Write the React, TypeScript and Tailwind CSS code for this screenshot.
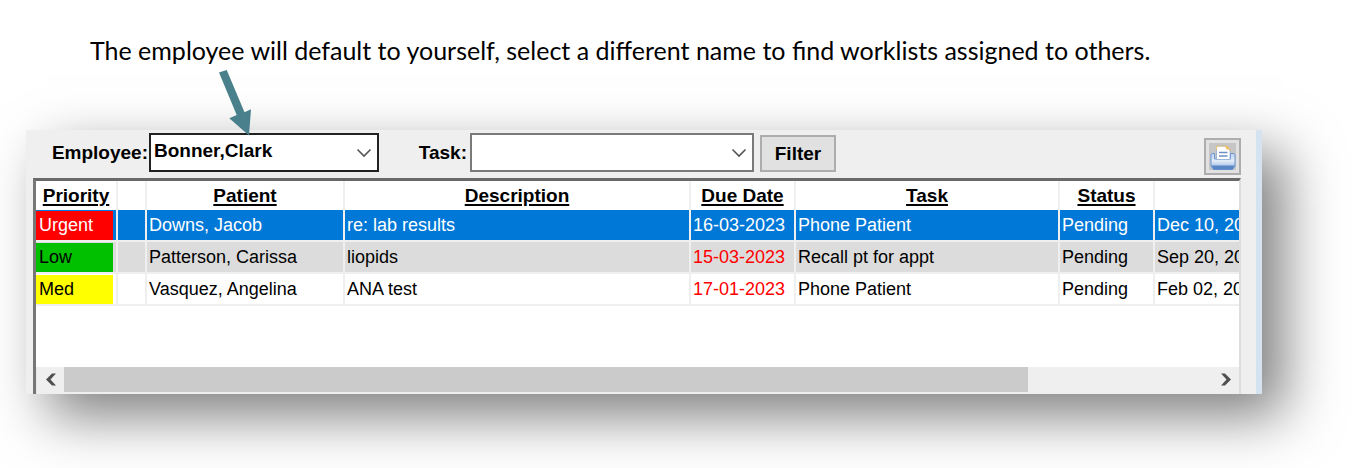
import React from "react";

type Row = {
  priority: string;
  priorityClass: string;
  rowClass: string;
  dueClass: string;
  patient: string;
  description: string;
  due: string;
  task: string;
  status: string;
  created: string;
};

const rows: Row[] = [
  {
    priority: "Urgent",
    priorityClass: "bg-[#ff0000] text-white",
    rowClass: "bg-[#0078d7] text-white",
    dueClass: "text-white",
    patient: "Downs, Jacob",
    description: "re: lab results",
    due: "16-03-2023",
    task: "Phone Patient",
    status: "Pending",
    created: "Dec 10, 2022",
  },
  {
    priority: "Low",
    priorityClass: "bg-[#00c000] text-black",
    rowClass: "bg-[#dcdcdc] text-black",
    dueClass: "text-[#ff0000]",
    patient: "Patterson, Carissa",
    description: "liopids",
    due: "15-03-2023",
    task: "Recall pt for appt",
    status: "Pending",
    created: "Sep 20, 2022",
  },
  {
    priority: "Med",
    priorityClass: "bg-[#ffff00] text-black",
    rowClass: "bg-white text-black",
    dueClass: "text-[#ff0000]",
    patient: "Vasquez, Angelina",
    description: "ANA test",
    due: "17-01-2023",
    task: "Phone Patient",
    status: "Pending",
    created: "Feb 02, 2023",
  },
];

const headers = ["Priority", "", "Patient", "Description", "Due Date", "Task", "Status", ""];

function Chevron() {
  return (
    <svg
      viewBox="0 0 16 10"
      className="pointer-events-none absolute right-[7px] top-1/2 h-2.5 w-4 -translate-y-1/2"
      fill="none"
      stroke="#555"
      strokeWidth="1.6"
      aria-hidden="true"
    >
      <path d="M1.5 1.5 L8 8 L14.5 1.5" />
    </svg>
  );
}

function PrinterIcon() {
  return (
    <svg viewBox="0 0 27 27" className="size-[27px]" aria-hidden="true">
      <defs>
        <linearGradient id="tray" x1="0" y1="0" x2="0" y2="1">
          <stop offset="0" stopColor="#b9d0f0" />
          <stop offset="0.45" stopColor="#e4edf8" />
          <stop offset="0.75" stopColor="#b4cbea" />
          <stop offset="1" stopColor="#6d95d0" />
        </linearGradient>
      </defs>
      <rect width="27" height="27" fill="#c6c6c6" />
      <path
        d="M2 12 Q2 10.500 3.500 10.500 H5.500 V16 H21.500 V10.500 H24.500 Q26 10.500 26 12 V23 L23.500 26.500 H4.500 L2 23 Z"
        fill="url(#tray)"
        stroke="#6c96d2"
        strokeWidth="1"
      />
      <path d="M2.500 22.500 H25.500 L23.300 26.500 H4.700 Z" fill="#5b86c6" />
      <path d="M7.500 3 H17.500 L21 6.500 V16.500 H7.500 Z" fill="#fff" stroke="#8eabd2" strokeWidth="0.8" />
      <path d="M7.500 7 V3 H17.500 L21 6.500 V8" fill="none" stroke="#e6c27a" strokeWidth="1.1" />
      <path d="M16 3 L17.500 6.500 H21 L17.500 3 Z" fill="#efc25f" />
      <path d="M10 9.500 H18.500 M10 13 H18.500" stroke="#6d8fc4" strokeWidth="1.3" />
    </svg>
  );
}

export default function App() {
  return (
    <main className="overflow-hidden bg-white pb-[74px] pl-[26px] pr-[90px] font-['Liberation_Sans',Arial,sans-serif] text-black">
      <p className="h-[130px] pl-16 pt-[34px] font-['Lato',sans-serif] text-[25px] leading-8 whitespace-nowrap">
        The employee will default to yourself, select a different name to find worklists assigned to others.
      </p>

      <section className="relative border-r-[6px] border-[#d5e3f1] bg-[#efefef] pl-[7px] pr-[15px] shadow-[22px_22px_52px_rgba(0,0,0,0.5)]">
        <svg
          viewBox="0 0 34 68"
          className="pointer-events-none absolute -top-[61px] left-[192px] z-10 h-[68px] w-[34px]"
          aria-hidden="true"
        >
          <path d="M1 3.500 L8.700 1 L26.500 43.300 L33 40.300 L31 66.500 L11.300 49.300 L18.700 45.900 Z" fill="#49808c" />
        </svg>

        <form className="flex h-12 items-start pt-[3px] text-[19px] font-bold" onSubmit={(e) => e.preventDefault()}>
          <label htmlFor="employee" className="w-[116px] pr-px text-right leading-10">
            Employee:
          </label>
          <div className="relative w-[230px]">
            <select
              id="employee"
              className="block h-[39px] w-full appearance-none border-2 border-[#222] bg-white pb-0.5 pl-[3px] font-bold outline-none"
            >
              <option>Bonner,Clark</option>
            </select>
            <Chevron />
          </div>
          <label htmlFor="task" className="w-[91px] pr-[3px] text-right leading-10">
            Task:
          </label>
          <div className="relative w-[284px]">
            <select
              id="task"
              className="block h-[39px] w-full appearance-none border-2 border-[#7a7a7a] bg-white pl-1 font-bold outline-none"
            >
              <option></option>
            </select>
            <Chevron />
          </div>
          <button
            type="submit"
            className="ml-[6px] mt-[2px] h-[37px] w-[76px] border-2 border-[#adadad] bg-[#e1e1e1] leading-8"
          >
            Filter
          </button>
          <button
            type="button"
            aria-label="Print"
            className="ml-auto mt-[5px] flex size-[37px] items-center justify-center border-2 border-[#adadad] bg-[#e1e1e1]"
          >
            <PrinterIcon />
          </button>
        </form>

        <div className="border-l-[3px] border-r-2 border-t-[3px] border-l-[#777] border-r-[#dedede] border-t-[#696969] bg-white">
          <table className="w-full table-fixed border-separate border-spacing-0 text-[18px] leading-7">
            <colgroup>
              <col className="w-[82px]" />
              <col className="w-[29px]" />
              <col className="w-[198px]" />
              <col />
              <col className="w-[105px]" />
              <col className="w-[264px]" />
              <col className="w-[95px]" />
              <col className="w-[84px]" />
            </colgroup>
            <thead>
              <tr className="h-[29px] text-[19px]">
                {headers.map((h, i) => (
                  <th
                    key={i}
                    scope="col"
                    className="whitespace-nowrap border-r-2 border-[#efefef] p-0 font-bold underline decoration-2 underline-offset-2 last:border-r-0"
                  >
                    {h}
                  </th>
                ))}
              </tr>
            </thead>
            <tbody className="[&_td]:h-8 [&_td]:overflow-hidden [&_td]:whitespace-nowrap [&_td]:border-b-2 [&_td]:border-r-2 [&_td]:border-[#efefef] [&_td]:p-0 [&_td]:pl-0.5 [&_td:last-child]:border-r-0">
              {rows.map((r) => (
                <tr key={r.patient} className={r.rowClass}>
                  <td>
                    <div className={`-ml-0.5 mr-[3px] h-[29px] pl-[3px] leading-[29px] ${r.priorityClass}`}>
                      {r.priority}
                    </div>
                  </td>
                  <td />
                  <td>{r.patient}</td>
                  <td>{r.description}</td>
                  <td className={r.dueClass}>{r.due}</td>
                  <td>{r.task}</td>
                  <td>{r.status}</td>
                  <td>{r.created}</td>
                </tr>
              ))}
            </tbody>
          </table>

          <div className="mt-[61px] flex h-[27px] border-l border-[#e5e5e5] bg-[#efefef] pb-0.5">
            <button type="button" aria-label="Scroll left" className="flex w-[27px] items-center justify-center">
              <svg viewBox="0 0 12 13" className="h-[13px] w-3" aria-hidden="true">
                <path d="M11 0.500 H7 L1 6.500 L7 12.500 H11 L5.500 6.500 Z" fill="#505050" />
              </svg>
            </button>
            <div className="flex flex-1">
              <div className="w-[84%] bg-[#cbcbcb]" />
            </div>
            <button type="button" aria-label="Scroll right" className="flex w-[27px] items-center justify-center">
              <svg viewBox="0 0 12 13" className="h-[13px] w-3" aria-hidden="true">
                <path d="M1 0.500 H5 L11 6.500 L5 12.500 H1 L6.500 6.500 Z" fill="#505050" />
              </svg>
            </button>
          </div>
        </div>
      </section>
    </main>
  );
}
